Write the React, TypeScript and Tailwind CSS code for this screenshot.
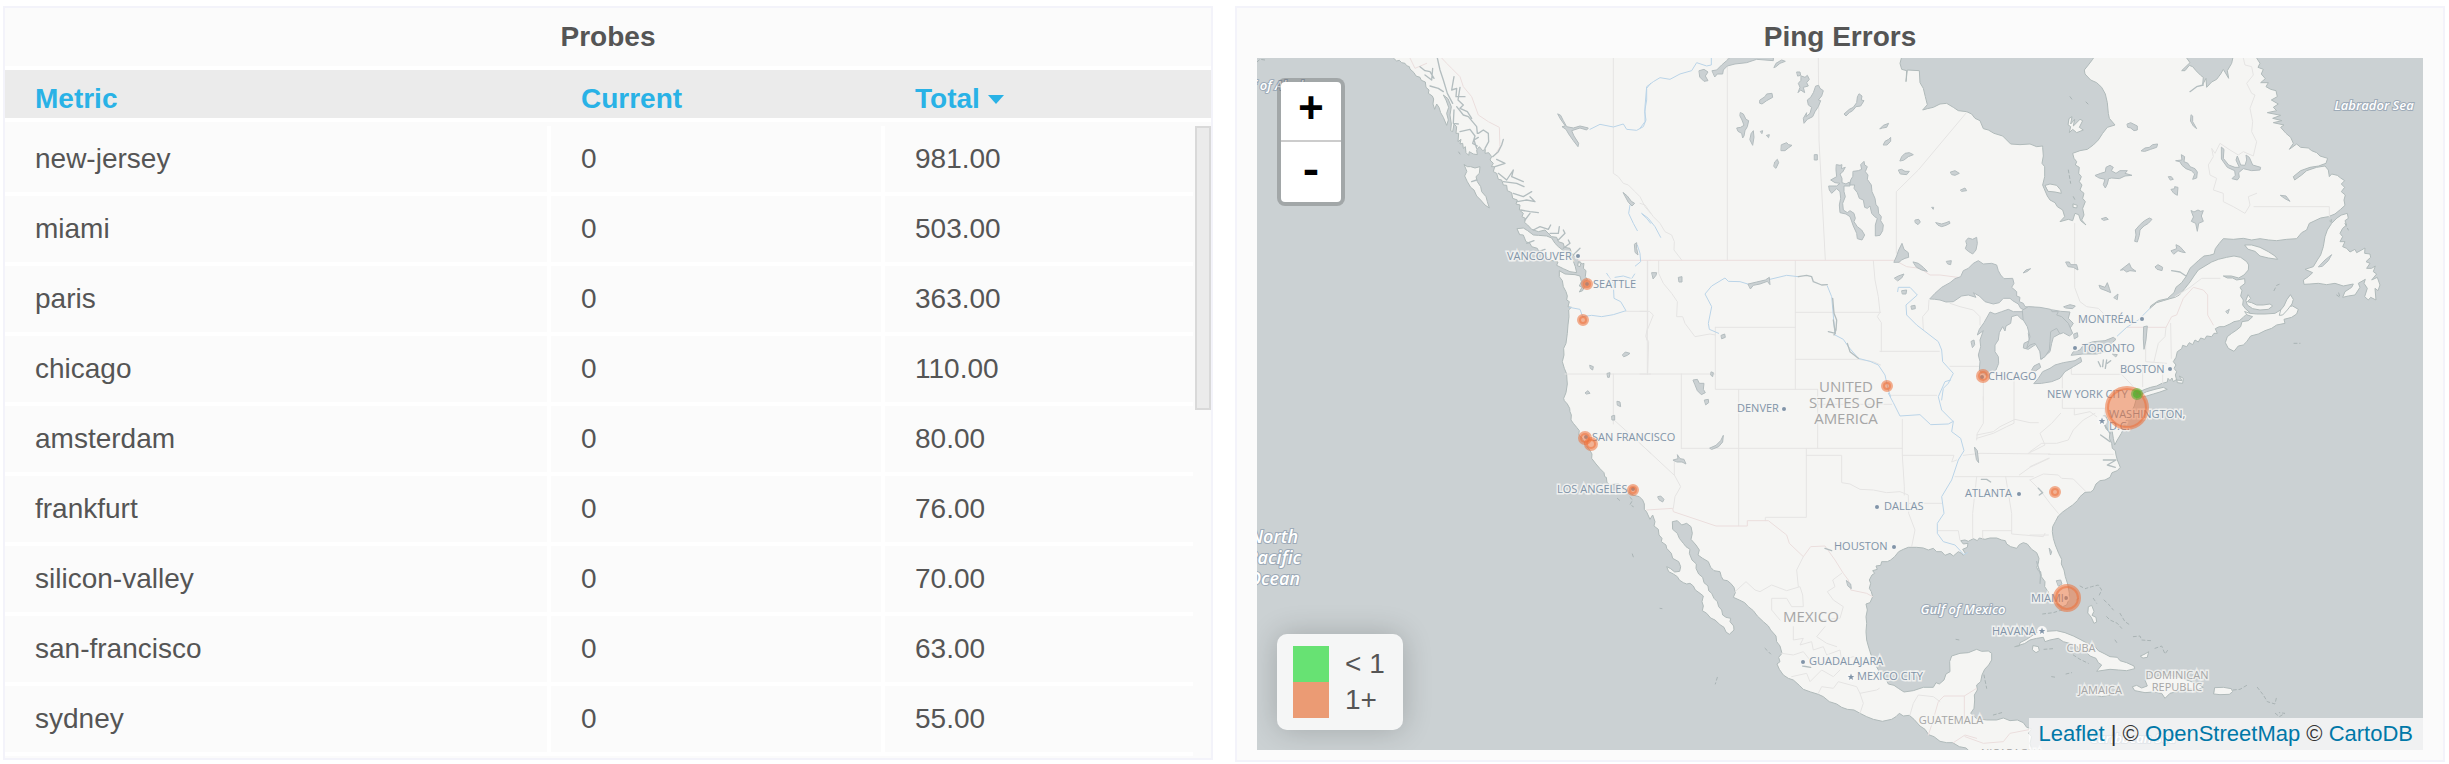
type Sheet = [number, number];
type Leg = [Sheet, string];

// The base map is digitised on six overlapping sheets; each has its own origin.
const NW: Sheet = [-81, -174];
const N: Sheet = [1149, -24];
const NE: Sheet = [2319, -24];
const SW: Sheet = [-81, 966];
const S: Sheet = [1149, 966];
const SE: Sheet = [2319, 966];

function line(...legs: Leg[]): string {
  const pts = legs.flatMap(([[ox, oy], text]) =>
    text
      .trim()
      .split(/\s+/)
      .map((pair) => {
        const [x, y] = pair.split(",").map(Number);
        return `${x + ox} ${y + oy}`;
      })
  );
  return "M" + pts.join("L");
}

const area = (...legs: Leg[]) => line(...legs) + "Z";

const mainland = area(
  [NW, "485,160 490,174 500,183 508,181 515,188 525,190 530,197 538,200 540,207 552,218 558,228 570,232 574,241 586,246 588,262 597,270 595,280 607,288 611,297 609,312 614,328 620,312 627,322 632,338 640,352 650,376 655,360 650,340 656,322 648,300 640,285 654,296 664,320 660,345 664,372 662,392 668,395 672,372 680,380 678,400 686,400 684,425 693,418 690,432 698,430 700,445 706,440 708,458 716,466 718,455 730,462 742,464 740,450 748,440 758,452 766,448 765,460 776,458 785,470 780,480 790,490 784,500 794,500 790,515 800,520 805,538 815,540 820,555 830,556 832,572 845,578 848,595 862,600 858,612 870,615 868,630 880,640 876,650 886,655 884,668 893,675 905,688 925,695 945,690 965,710 980,712 985,725 1000,730 1003,742 1020,745 1025,760 1040,775 1050,785 1056,792 1062,790 1060,805 1068,812 1066,830 1072,838 1066,850 1072,858 1062,862 1058,872 1048,876 1056,862 1048,858 1054,845 1050,828 1035,824 1005,822 988,812 988,830 997,842 1000,860 1008,875 1012,888 1010,900 1018,905 1014,920 1024,922 1016,930 1017,950 1014,975 1012,1000 1008,1030 1001,1045 1002,1065 997,1085 1003,1105 1010,1122 1011,1140"],
  [SW, "1012,12 1008,38 1001,55 1003,62 1012,72 1019,85 1020,95 1024,105 1023,120 1030,130 1040,142 1048,152 1046,165 1060,178 1066,195 1078,208 1086,222 1085,235 1098,252 1110,266 1122,278 1124,290 1129,292 1131,308 1140,314 1165,312 1178,320 1190,325 1200,340 1212,346 1228,350 1238,360 1243,372 1243,388 1250,396 1260,418"],
  [S, "38,405 45,425 42,438 55,448 57,465 66,475 64,485 78,495 80,505 94,520 98,535 116,545 122,560 119,574 104,576 92,566 80,560 86,575 100,582 112,590 118,600 130,608 140,612 150,610 160,618 166,630 180,640 190,648 186,665 190,678 187,692 200,700 212,714 225,720 240,734 252,742 258,756 268,763 282,750 281,738 270,725 272,715 258,712 248,705 245,690 236,680 232,665 222,655 215,640 206,632 204,618 192,608 188,592 176,582 168,565 169,552 156,540 148,520 150,508 138,500 130,490 118,475 112,460 98,448 97,425 112,422 125,435 140,430 153,440 157,460 153,478 168,495 178,510 174,525 188,535 205,545 212,562 222,572 240,575 244,590 250,600 262,602 272,610 282,622 286,638 280,652 298,660 314,668 325,680 340,692 352,708 370,725 385,738 392,750 408,768 410,785 420,798 426,820 416,832 420,845 411,852 418,868 430,885 445,895 460,900 478,916 490,928 512,936 535,943 550,950 568,965 590,972 605,982 622,988 642,990 660,1000 680,1010 700,1018 727,1024 755,1018 768,1010 778,1000 790,1008 808,1006 822,1018 840,1038 855,1048 866,1064 882,1070 900,1084 920,1088 938,1088 958,1100 978,1104 995,1120 1000,1160 1200,1160 1176,1110 1170,1090 1175,1070 1166,1060 1174,1046 1160,1042 1150,1028 1132,1020 1110,1022 1090,1014 1070,1020 1040,1020 1010,1016 992,1000 1002,985 1004,960 1003,945 1012,930 1010,915 1022,905 1026,885 1034,868 1046,855 1055,840 1055,820 1045,813 1025,814 1010,808 985,818 960,820 935,828 929,845 930,875 918,882 912,900 898,912 888,908 880,922 850,922 820,932 792,936 775,925 762,916 745,912 735,890 722,885 714,868 704,850 695,830 690,815 684,795 680,780 678,755 680,730 678,710 682,690 678,672 690,668 698,650 694,635 688,625 692,610 688,600 696,585 704,580 698,572 712,568 708,558 722,556 725,545 742,545 752,540 764,530 776,515 790,508 805,502 830,502 850,504 865,510 880,505 890,515 905,515 915,526 930,520 940,528 955,515 965,520 970,526 976,520 968,508 982,502 984,490 970,492 962,482 975,480 985,484 1000,476 1012,482 1018,474 1035,478 1050,474 1070,474 1085,480 1096,482 1100,492 1112,500 1130,505 1138,494 1150,488 1162,492 1175,508 1190,518 1197,535 1195,550 1190,562 1195,572 1202,575 1204,590 1215,605 1214,620 1225,636"],
  [SE, "58,650 70,668 85,672 98,680 110,675 116,660 118,640 113,612 106,590 102,570 94,552 95,538 86,520 76,495 70,475 67,455 68,440 76,425 85,408 98,396 112,386 128,375 142,362 150,350 165,337 182,336 190,330 198,312 210,302 225,300 240,292 246,278 262,272 271,262 262,240 258,225 256,212 247,205 245,190 238,175 240,158 228,146 222,130 216,110 226,106 234,122 240,135 246,150 250,175 254,195 262,180 274,160 280,148 275,138 286,125 296,112 305,95 313,78 318,60 322,45 326,36 345,28 362,22 380,18 396,10"],
  [NE, "405,998 412,996 414,985 420,992 426,984 430,995 440,988 442,998 458,1000 460,985 448,978 456,992 440,990 436,975 440,965 432,955 438,945 430,935 438,922 442,905 455,896 458,886 470,890 478,878 488,884 495,870 505,876 512,864 524,868 530,858 545,860 552,850 562,850 556,836 568,830 582,830 600,822 612,815 628,812 640,802 648,794 660,788 646,776 638,765 640,750 632,738 636,722 630,712 645,700 644,686 620,690 608,684 592,684 580,678 604,678 626,684 642,675 655,660 656,645 650,635 632,622 612,618 590,622 565,628 545,636 525,648 505,660 492,678 480,696 465,715 448,735 435,742 420,746 400,752 380,758 360,775 362,768 385,752 412,746 432,728 438,712 455,698 468,680 480,655 492,644 505,632 522,618 538,616 552,612 556,596 568,580 580,566 610,568 640,565 665,570 690,566 716,570 740,572 770,568 800,566 815,548 830,540 838,520 855,512 872,504 895,500 915,492 932,478 945,466 942,450 946,435 934,425 944,412 934,402 944,392 932,384 922,376 905,372 898,380 895,360 885,348 860,352 830,362 815,375 794,390 790,380 812,362 840,352 866,348 888,340 893,325 870,318 860,308 845,302 835,294 812,292 800,282 778,298 790,280 782,262 768,250 752,232 762,225 730,218 756,212 728,205 752,196 712,188 740,182 730,172 745,162 724,150 742,140 738,122 722,118 708,110 715,98 692,98 706,86 694,72 700,58 684,52 690,40 680,24 680,8 612,8 605,40 592,62 596,85 580,58 572,72 560,88 545,96 530,112 528,85 518,104 520,82 512,76 498,62 488,50 478,46 465,62 455,62 480,38 470,24 470,8 200,8 188,28 175,45 163,60 165,72 182,90 200,98 215,112 226,132 232,158 235,190 238,205 255,225 232,232 218,250 205,270 190,285 172,298 150,302 128,310 132,325 140,335 136,345 148,352 146,370 154,380 148,395 156,405 150,420 162,430 158,445 166,455 158,475 162,495 155,510 168,525 152,512 146,494 135,490 128,512 115,508 90,515 104,500 98,480 82,470 75,458 60,450 52,438 42,415 38,405 44,380 44,350 36,340 40,318 38,292"],
  [N, "1208,288 1190,290 1170,282 1140,284 1112,282 1100,270 1088,258 1062,250 1045,240 1030,236 1020,212 1005,205 995,192 980,185 955,182 940,172 920,160 900,162 880,172 862,176 848,180 862,164 856,140 850,115 840,98 838,62 802,60 798,95 800,62 785,58 780,40 788,10"]
);

const islands = [
  area([NW, "703,494 712,500 722,500 735,504 750,500 748,520 738,530 742,545 752,560 755,575 768,590 772,605 778,624 765,615 752,600 740,588 732,570 722,562 712,545 704,528 710,515"]),
  area([NW, "862,686 880,684 893,692 910,705 925,706 950,708 965,714 975,730 985,740 1000,752 1015,765 1028,778 1036,800 1040,818 1020,815 1000,806 980,796 984,786 960,780 940,760 930,762 922,745 905,740 900,730 888,725 880,705 870,704"]),
  area([NW, "1046,786 1052,792 1050,800 1044,798"]),
  area([NE, "645,585 665,585 690,592 715,605 735,618 743,628 715,624 690,618 675,604 655,598"]),
  area([NE, "935,495 952,490 955,505 945,512 950,525 938,535 930,550 938,560 930,575 945,575 938,590 950,595 960,606 975,598 980,608 995,600 1005,594 1004,610 1020,612 1022,622 1008,635 1020,640 1010,655 1025,655 1036,648 1030,665 1040,672 1025,690 1042,682 1050,705 1044,722 1035,715 1038,750 1022,742 1015,750 1004,740 1012,715 1002,700 1006,688 985,700 990,712 975,735 955,738 938,742 945,725 965,712 970,702 940,708 915,700 890,704 865,700 840,702 822,703 820,690 835,680 848,668 825,658 850,650 862,630 872,615 880,590 885,560 892,540 905,520 920,505"]),
  area([NE, "645,785 660,790 680,792 705,792 735,790 755,778 770,770 788,768 805,778 800,792 785,802 762,808 765,820 740,825 725,835 705,842 685,852 662,858 650,875 640,885 625,888 612,904 595,895 586,878 592,860 605,850 620,840 632,830 636,815 655,812 668,800 652,795"]),
  area([NE, "782,735 790,748 786,762 772,780 758,795 748,796 752,780 762,768 770,750"]),
  area([NE, "655,735 662,745 652,755 665,758 680,765 700,765 720,762 728,768 715,778 690,780 668,776 652,765 648,752"]),
  area([NE, "46,406 60,402 80,406 92,420 94,430 75,426 55,424"]),
  area([SE, "330,45 350,35 375,28 400,22 412,28 390,36 370,42 350,48 332,52"]),
  area([SE, "-45,800 -32,798 -30,788 -10,778 5,768 20,758 50,754 80,752 105,758 130,768 150,778 172,790 195,800 205,812 225,822 240,830 262,832 270,842 290,848 312,858 314,866 290,872 265,870 240,868 200,874 215,855 205,848 198,835 180,828 165,812 148,808 140,798 118,790 100,785 85,775 60,780 45,785 40,772 20,775 0,780 -15,790"]),
  area([SE, "10,797 25,800 28,812 18,818 8,810"]),
  area([SE, "308,920 320,916 335,924 352,918 345,900 365,895 385,888 410,884 440,890 470,900 505,912 520,922 500,930 470,926 440,935 420,940 405,955 395,940 370,936 345,938 315,932"]),
  area([SE, "188,935 205,930 235,934 240,945 215,950 195,945"]),
  area([SE, "555,923 580,922 604,926 608,935 598,943 570,944 552,942"]),
  area([SE, "176,680 185,676 192,694 186,706 198,712 200,726 192,730 184,712 174,700"]),
  area([SE, "332,828 345,822 356,815 352,832 340,834"]),
  area([NE, "118,205 126,200 122,222 134,208 130,228 150,208 158,212 148,232 160,240 140,248 128,238 118,248 122,230 115,225"]),
  area([NE, "130,462 142,466 140,474 130,472"]),
  area([NE, "900,512 905,508 904,516"]),
];

const waters = [
  area([N, "870,746 885,730 905,712 930,698 945,686 962,680 970,662 985,655 1000,640 1015,632 1030,642 1055,640 1070,645 1075,662 1082,675 1092,686 1118,685 1122,700 1115,712 1130,725 1130,738 1140,742 1138,755 1150,760 1155,770 1180,772 1210,778 1240,780 1262,784 1290,786 1285,805 1300,820 1290,835 1270,830 1262,815 1240,800 1262,850 1240,862 1235,880 1230,905 1215,918 1205,928 1200,905 1200,885 1192,880 1180,888 1165,898 1150,894 1152,880 1168,872 1165,850 1172,838 1166,815 1145,808 1132,795 1115,800 1112,820 1098,828 1095,843 1088,830 1078,848 1075,870 1065,885 1065,905 1075,920 1076,940 1068,960 1050,975 1028,975 1018,960 1020,935 1015,915 1022,890 1020,870 1030,842 1012,855 1018,838 1032,818 1045,795 1050,786 1065,792 1085,785 1105,778 1120,785 1150,785 1165,785 1142,775 1135,762 1118,752 1110,745 1090,745 1078,758 1060,762 1035,755 1018,738 1000,728 1008,742 985,735 965,738 940,755 918,756 900,750 885,748"]),
  area([NE, "-22,780 -5,770 30,772 62,778 66,785 85,785 80,795 95,800 115,820 128,850 118,858 100,848 90,852 80,835 62,845 60,875 58,900 45,920 32,928 30,905 15,880 0,885 -10,895 0,860 -8,830 -20,810"]),
  area([NE, "12,1000 25,985 38,965 60,955 75,945 100,938 135,932 152,922 155,935 130,950 105,965 90,985 65,995 35,1000"]),
  area([NE, "124,915 130,905 150,900 160,885 190,875 225,872 250,862 258,868 245,880 222,885 228,905 200,912 160,912"]),
  area([NE, "5,960 12,948 28,940 32,952 18,962"]),
  area([N, "217,62 230,60 245,45 260,32 272,20 400,20 400,32 350,28 320,38 285,42 262,48 250,60 248,72 232,72 225,80"]),
  area([N, "402,52 408,40 425,30 436,34 420,40 408,50"]),
  area([N, "178,62 192,58 204,66 196,78 204,92 192,94 180,82"]),
  area([N, "360,150 375,140 380,132 396,130 398,142 380,152 366,162 360,160"]),
  area([N, "471,66 480,66 482,76 474,78"]),
  area([N, "484,78 495,82 502,76 508,88 500,98 505,108 490,112 494,128 482,120 474,128 480,112 475,100 482,92"]),
  area([N, "528,108 536,106 540,115 550,122 545,138 535,150 542,152 535,170 525,185 518,200 502,208 492,220 490,205 500,188 498,200 510,190 515,172 505,165 502,150 512,142 520,128"]),
  area([N, "302,188 310,192 318,208 326,212 322,230 315,242 312,258 308,264 305,250 294,244 290,234 302,232 312,226 306,210 300,198"]),
  area([N, "334,250 340,242 342,262 338,286 330,270"]),
  area([N, "362,244 368,242 366,250"]),
  area([N, "380,256 388,254 386,262"]),
  area([N, "425,284 440,278 446,284 456,286 445,294 435,302 424,302"]),
  area([N, "405,335 412,328 416,338 408,355 402,350"]),
  area([N, "524,314 532,314 532,330 524,330"]),
  area([N, "658,132 666,138 664,150 672,152 662,168 648,170 638,182 628,188 618,198 612,192 628,178 640,172 650,158 652,142"]),
  area([N, "720,236 730,226 746,220 740,232 728,234"]),
  area([N, "730,284 735,274 746,268 752,262 752,274 742,284"]),
  area([N, "780,332 785,320 795,310 808,308 820,314 805,320 792,330"]),
  area([N, "776,360 785,358 795,364 808,364 800,374 782,372"]),
  area([N, "932,366 945,362 958,370 945,376 936,374"]),
  area([N, "962,420 975,414 980,422 966,424"]),
  area([N, "826,510 836,508 841,516 834,524 826,518"]),
  area([N, "888,518 905,522 918,518 928,514 930,520 918,526 905,530 895,526"]),
  area([N, "876,472 881,472 880,477"]),
  area([N, "590,344 600,346 606,344 604,356 616,352 608,366 600,372 606,385 606,398 618,402 628,396 630,408 612,408 612,425 616,440 608,460 610,480 622,488 630,482 642,490 646,505 642,515 652,530 665,540 674,555 666,570 652,566 650,550 640,528 630,500 618,492 600,488 598,465 602,445 600,425 590,416 575,430 568,420 566,408 590,408 600,400 585,398 572,390 590,380 588,360"]),
  area([N, "640,364 655,362 665,358 662,344 672,334 674,345 682,350 676,365 684,375 682,388 694,405 696,425 705,445 708,465 714,470 716,490 724,500 722,512 730,525 728,542 720,556 706,558 706,525 712,505 704,500 695,490 690,468 682,475 674,472 670,450 658,445 652,428 642,415 644,405 630,405 632,390 638,380"]),
  area([N, "978,572 985,564 998,568 1010,562 1012,580 1008,600 998,612 985,604 976,596 980,585"]),
  area([N, "762,636 770,618 776,600 786,580 792,598 805,608 806,622 795,625 785,630 778,636"]),
  area([N, "820,636 835,640 850,652 862,664 845,660 830,652"]),
  area([N, "764,684 775,678 792,672 785,684 774,692"]),
  area([N, "786,722 800,720 798,732 788,732"]),
  area([N, "814,768 825,766 826,776 816,778"]),
  area([N, "920,634 934,632 932,644 924,642"]),
  area([N, "1150,668 1158,660 1172,656 1162,664"]),
  area([N, "36,668 50,668 48,676 40,686"]),
  area([N, "116,682 126,680 126,696 118,696"]),
  area([N, "244,856 254,852 256,862 246,866"]),
  area([N, "214,966 220,968 218,980 213,976"]),
  area([N, "160,990 172,988 178,1000 192,1000 190,1018 196,1028 184,1034 172,1022 165,1005"]),
  area([N, "994,874 1002,870 1004,884 998,892"]),
  area([N, "325,702 350,696 376,690 388,682 390,704 382,694 360,702 340,706 332,716"]),
  area([S, "194,60 205,58 206,68 198,74"]),
  area([NW, "984,342 992,346 1000,362 1010,380 1030,384 1050,378 1075,384 1070,390 1050,384 1025,392 1032,408 1046,430 1044,440 1030,422 1016,402 1008,388 996,380 1006,378 992,358"]),
  area([NW, "1180,578 1192,588 1204,604 1214,610 1206,618 1196,608"]),
  area([NW, "1178,1064 1186,1056 1200,1060 1192,1066 1182,1070"]),
  area([NW, "1080,1096 1090,1100 1088,1110 1082,1106"]),
  area([NW, "1132,1120 1140,1118 1138,1132 1134,1132"]),
  area([NW, "1214,732 1220,728 1220,745 1224,765 1216,758"]),
  area([SW, "1066,38 1074,32 1080,40 1070,42"]),
  area([SW, "1162,64 1170,66 1172,80 1163,76"]),
  area([SW, "1146,108 1154,106 1154,120 1147,120"]),
  area([S, "54,350 62,348 72,358 68,366 58,360"]),
  area([S, "100,240 114,236 112,224 120,236 132,238 138,252 126,246 112,246"]),
  area([S, "210,204 228,196 242,182 250,166 248,186 236,200 216,208"]),
  area([S, "1004,202 1012,212 1016,248 1010,240"]),
  area([S, "620,602 632,612 634,626 624,618"]),
  area([NE, "292,222 302,218 322,228 322,240 312,242 302,234 294,232"]),
  area([NE, "484,195 488,198 488,215 500,236 490,228 482,214"]),
  area([NE, "334,302 345,294 358,292 368,284 383,282 380,292 362,298 345,304"]),
  area([NE, "196,376 212,370 226,366 228,352 240,346 250,352 244,362 258,370 270,362 292,362 285,370 306,376 285,378 268,386 245,384 236,386 232,402 226,414 220,404 225,388 208,384"]),
  area([NE, "438,332 456,330 454,314 464,320 462,335 474,340 480,350 495,356 502,366 500,384 488,388 494,372 484,362 468,356 456,346 450,336"]),
  area([NE, "416,380 424,380 430,388 422,390"]),
  area([NE, "424,418 434,416 434,410 444,412 442,436 432,430"]),
  area([NE, "344,512 358,504 366,508 355,520 342,528 330,540 328,556 322,576 314,574 318,555 316,540 330,524"]),
  area([NE, "215,506 228,502 235,508 222,511"]),
  area([NE, "575,292 582,298 580,325 596,345 615,352 628,352 618,330 622,318 632,345 645,346 650,330 648,315 658,322 668,345 692,352 690,360 665,362 640,356 626,368 628,382 622,390 606,386 616,376 614,362 592,352 575,328"]),
  area([NE, "752,436 768,438 780,454 765,446"]),
  area([NE, "484,482 492,486 504,480 512,484 520,482 514,498 520,514 506,520 502,544 497,520 484,514 490,502"]),
  area([NE, "424,602 440,596 438,584 450,590 466,608 455,606 444,602 432,612"]),
  area([NE, "272,660 285,650 298,640 304,654 318,664 300,662 290,666 282,660"]),
  area([NE, "376,650 384,644 398,652 396,662 382,658"]),
  area([NE, "108,636 118,636 122,644 140,644 144,660 130,652 115,650"]),
  area([NE, "208,706 225,712 232,698 238,715 242,728 228,722 212,716"]),
  area([NE, "252,742 264,732 262,748"]),
  area([NE, "102,770 120,764 136,768 128,776 108,774"]),
  area([NE, "342,830 352,828 348,870 342,898 340,868"]),
  area([NE, "132,852 142,848 144,860 134,866"]),
  area([NE, "588,784 598,778 594,790"]),
  area([NE, "866,650 885,630 905,614 895,632 878,648"]),
  area([NE, "248,912 262,914 258,920"]),
  area([SE, "80,602 92,600 96,612 86,618"]),
  area([SE, "58,505 65,515 62,524"]),
];

const inlets = [
  line([NW, "570,200 585,212 600,215 612,235"]),
  line([NW, "585,225 605,240 608,205"]),
  line([NW, "622,174 630,210 640,240 652,280 668,310"]),
  line([NW, "600,258 625,265 640,275"]),
  line([NW, "672,230 665,270 680,265 678,290 705,290"]),
  line([NW, "690,262 684,300 700,315 690,325 712,335 725,355"]),
  line([NW, "680,320 700,345 715,350 740,380 742,400"]),
  line([NW, "672,330 670,370 685,372"]),
  line([NW, "690,395 720,388 735,408 728,430 742,438"]),
  line([NW, "745,400 760,390 775,400 776,425 765,445"]),
  line([NW, "740,445 732,420 745,412"]),
  line([NW, "788,470 805,455 815,435 820,418"]),
  line([NW, "795,500 825,490 800,478"]),
  line([NW, "805,520 830,540 850,510 845,530 880,545"]),
  line([NW, "820,545 860,550 882,560"]),
  line([NW, "850,580 880,590 905,575"]),
  line([NW, "862,605 890,600 915,605 900,590"]),
  line([NW, "872,630 900,635 925,638"]),
  line([NW, "885,660 900,640"]),
  line([NW, "910,690 930,680 955,688 962,675"]),
  line([NW, "960,700 985,700 988,680"]),
  line([NW, "985,720 1005,700 1000,690"]),
  line([NW, "1000,745 1020,730 1015,720"]),
  line([NW, "1030,765 1050,745"]),
  line([NW, "890,730 912,722"]),
  line([NW, "925,755 945,748"]),
  line([NW, "725,545 740,540"]),
  line([N, "475,680 500,676 515,680 520,695 545,705 562,704"]),
  line([N, "578,745 582,790 590,810 588,840 582,855"]),
  line([N, "565,845 586,850 580,810"]),
  line([N, "622,880 630,905 655,925"]),
  line([NE, "480,125 500,110 520,105"]),
  line([NE, "425,662 450,666 468,678"]),
  line([NE, "205,935 212,950"]),
  line([NE, "220,930 218,950"]),
  line([NE, "230,930 226,955"]),
  line([NE, "242,932 232,940"]),
  line([SE, "215,120 240,160"]),
  line([SE, "212,165 240,185"]),
  line([SE, "220,240 258,240 232,255 256,262"]),
  line([SE, "25,325 38,338 28,345"]),
  line([SE, "20,545 32,585 30,610"]),
  line([S, "488,858 512,862"]),
  line([S, "555,505 575,512"]),
  line([S, "1024,298 1040,298 1052,306"]),
];

const reefs = [
  line([SE, "150,618 165,626 185,620 205,615 215,630 208,645"]),
  line([SE, "140,660 145,655"]),
  line([SE, "222,660 235,672 250,690"]),
  line([SE, "190,655 200,670"]),
  line([SE, "230,710 240,720 262,730 275,745"]),
  line([SE, "270,700 285,725 300,735"]),
  line([SE, "310,770 330,768 335,780 362,782"]),
  line([SE, "375,805 395,798 405,822 415,808"]),
  line([SE, "38,702 70,698 95,690"]),
  line([SE, "130,825 150,838 175,850"]),
  line([SE, "610,930 630,928 652,915"]),
  line([SE, "682,922 700,945 712,965 735,972 740,950"]),
  line([SE, "736,1000 748,1010 765,1000 748,998"]),
  line([SE, "65,890 78,892"]),
  line([SE, "108,882 125,878"]),
  line([SE, "42,808 70,806"]),
  line([SE, "255,780 262,790"]),
  line([NE, "120,140 126,148"]),
  line([NE, "115,360 122,400"]),
  line([NE, "130,440 138,455"]),
  line([NE, "168,156 174,162"]),
  line([NE, "792,880 810,880"]),
  line([NE, "732,722 740,706 750,702"]),
  line([NE, "945,520 955,540"]),
  line([NE, "920,735 930,742 925,725"]),
  line([S, "375,805 392,822"]),
  line([S, "948,778 958,780"]),
  line([S, "1060,1005 1085,998"]),
  line([S, "60,685 66,686"]),
  line([S, "232,892 226,912"]),
  line([S, "1032,885 1040,925"]),
  line([SW, "1162,355 1170,362"]),
  line([SW, "1200,352 1208,360 1200,374 1210,380"]),
  line([SW, "1207,522 1211,534"]),
  line([NW, "686,456 690,462"]),
  line([NW, "81,186 90,178 105,180"]),
];

const borders = [
  line([NW, "1150,174 1150,520 1165,530 1180,550 1195,555 1215,575 1230,590 1245,620 1262,640"]),
  line([N, "0,460 15,465 40,500 60,520 75,545 95,555 103,575 102,600 125,630"]),
  line([N, "262,24 262,630"]),
  line([N, "535,24 537,270 545,420 556,630"]),
  line([N, "980,187 835,360 769,425 769,610"]),
  line([NE, "134,520 134,712 150,755 170,770 205,775 220,790"]),
  line([N, "22,632 22,972"]),
  line([N, "56,632 56,670 70,700 95,730 112,755 110,800 128,800 135,820 165,860 210,852 226,855"]),
  line([N, "466,632 466,1018"]),
  line([N, "226,832 466,832"]),
  line([N, "226,832 226,1018 532,1018"]),
  line([N, "466,787 722,787"]),
  line([N, "466,928 655,928 700,935 722,945"]),
  line([N, "700,632 705,690 715,740 720,787 712,800 724,818 724,905"]),
  line([N, "720,904 898,904"]),
  line([N, "867,750 865,780 848,800 850,840"]),
  line([N, "930,760 960,770 1000,780 1020,800 1020,825"]),
  line([N, "930,949 1018,949"]),
  line([N, "1030,975 1030,1050"]),
  line([N, "1122,975 1122,1120 1100,1130 1060,1150 1010,1165"]),
  line([N, "0,784 28,784 40,795 22,840 20,870"]),
  line([N, "0,972 226,972"]),
  line([N, "124,972 124,1195"]),
  line([N, "296,1018 296,1427"]),
  line([NW, "1253,782 1253,930"]),
  line([NW, "1187,934 1253,934"]),
  line([NW, "1253,934 1253,980 1247,1010 1256,1025 1253,1122"]),
  line([NW, "1005,1122 1262,1122"]),
  line([SW, "1150,132 1150,118 1230,190 1262,220"]),
  line([NW, "1150,1122 1150,1260"]),
  line([S, "0,190 102,285"]),
  line([S, "124,205 787,205"]),
  line([S, "103,240 103,285 122,320 105,350 100,385"]),
  line([S, "533,28 533,205"]),
  line([S, "533,73 755,73"]),
  line([S, "787,118 787,226 942,226 935,246 950,240"]),
  line([S, "499,205 499,412 376,412 376,422"]),
  line([S, "499,226 605,226 605,308 630,312 660,328 700,330 740,338 780,335 805,345 806,400 825,450 815,500"]),
  line([S, "787,226 793,320 793,345"]),
  line([S, "806,370 905,370"]),
  line([S, "752,46 890,46"]),
  line([S, "945,290 1180,290"]),
  line([S, "970,226 1020,220 1230,222"]),
  line([S, "1010,290 998,400 998,475"]),
  line([S, "1097,290 1115,400 1115,462 1210,470 1215,460"]),
  line([S, "1028,452 1115,452"]),
  line([S, "1028,452 1028,475"]),
  line([S, "895,452 955,452 960,480"]),
  line([S, "1030,50 1030,130 1012,160 1010,180"]),
  line([S, "1010,165 1060,155 1080,140 1125,118 1170,128 1195,128"]),
  line([S, "1165,220 1215,195 1200,160 1235,130 1262,100"]),
  line([S, "1138,285 1170,262 1228,235"]),
  line([SE, "0,215 35,190 80,190 115,180 130,150 160,120 195,100"]),
  line([SE, "55,223 250,223"]),
  line([SE, "0,260 55,235"]),
  line([SE, "0,300 40,282 85,285 95,295 130,297 168,335"]),
  line([SE, "0,300 30,330 60,370 85,400"]),
  line([SE, "0,465 55,465"]),
  line([SE, "97,-15 97,85 225,85 225,110"]),
  line([SE, "133,85 133,105 180,95 200,110"]),
  line([NE, "124,935 124,973 275,973 310,1010"]),
  line([NE, "347,870 347,935 410,940"]),
  line([NE, "408,832 405,860 385,880 372,935"]),
  line([NE, "422,820 424,925"]),
  line([NE, "398,940 398,1000"]),
  line([NE, "338,945 338,1010"]),
  line([NE, "640,24 645,45 665,50 670,75 650,100 665,130 675,135 660,175 668,215 665,245 680,275 670,318 640,305 625,315 600,300 570,280 555,310 545,295 550,320 535,345 540,375 560,385 550,420 580,430 580,455 610,470 645,490 660,465 655,440 680,430"]),
  line([NE, "672,470 898,470 898,500"]),
  line([NE, "435,740 480,712 515,685 570,685"]),
  line([S, "285,635 318,605 345,630 360,635 395,615 440,632 480,620 488,645 490,680 455,680 440,655 395,655 395,690 420,720"]),
  line([S, "490,530 470,570 475,620"]),
  line([S, "605,580 578,600 585,620 562,635 580,660 610,680 600,715 540,720"]),
  line([S, "460,740 460,780 490,775 480,795 515,785 520,810 550,800 560,825 600,810 605,840 640,830 680,850"]),
  line([S, "555,740 530,770 560,790 590,800"]),
  line([S, "425,820 460,825 490,815 510,840 550,850"]),
  line([S, "455,890 500,880 510,905 545,870 580,890 600,870"]),
  line([S, "535,940 545,920 580,925 595,905 650,920 660,940 710,930 718,925"]),
  line([S, "660,940 670,970 660,1000"]),
  line([S, "810,1005 820,970 835,945 880,950 900,965"]),
];

const frontiers = [
  line([NW, "540,174 555,205 590,190"]),
  line([NW, "635,174 650,190 665,205 690,230 700,260 725,290 745,345 775,365 808,382 810,440 795,465"]),
  line([NW, "1045,781 1260,781"]),
  line([N, "30,631 765,631"]),
  line([N, "765,631 800,650 840,655 870,675 900,675 960,683"]),
  line([NE, "290,832 408,832 425,800 440,795 460,745 490,712 520,720 533,735 533,795 550,825"]),
  line([S, "20,390 98,385 100,395 228,438 322,438 322,422 385,422 440,465 448,490 490,530 512,500 555,498 585,540 610,580 625,600 632,630 680,640 698,650"]),
  line([S, "865,1065 875,1035 895,965 912,948 973,948 973,1015"]),
  line([S, "973,948 1010,925"]),
  line([S, "940,1088 975,1065 1010,1075"]),
  line([S, "975,1070 1030,1090 1090,1085 1110,1060 1172,1048"]),
];

const rivers = [
  line([NW, "1080,388 1110,373 1150,381 1180,372 1190,388 1220,391 1240,380 1248,360 1244,335 1250,300 1250,265 1262,250"]),
  line([N, "0,235 15,215 15,170 20,110 40,95 60,83 90,88 120,72 155,62 170,38 200,48 214,45 214,24"]),
  line([N, "5,490 25,505 45,530 62,562"]),
  line([NW, "1200,615 1196,640 1210,670 1222,692"]),
  line([NW, "1236,642 1250,655 1262,670"]),
  line([NW, "1222,735 1230,760 1232,785 1216,798"]),
  line([NW, "1155,832 1180,828 1205,836 1214,822"]),
  line([NW, "1130,820 1150,850 1152,895 1172,905 1188,932 1150,944 1115,950 1085,946 1058,950 1050,928 1018,922"]),
  line([N, "236,850 208,838 205,820 215,770 195,732 215,708 255,684 265,694 300,695 330,704 390,688 440,676 475,680"]),
  line([N, "562,708 575,740 585,855 610,868 625,890 655,925 690,934 715,945 735,975 745,1020 752,1040"]),
  line([S, "745,40 760,68 780,108 840,104 872,134 925,132 940,124"]),
  line([N, "773,725 775,712 810,712 832,735 798,765 800,795 830,825 895,875 905,900 908,935 940,970 925,1000 910,1015 905,1050"]),
  line([S, "932,0 915,5 895,50 905,90 940,125 935,155 962,175 972,212 955,240 935,300 905,350 912,400 892,430 892,460 910,485 945,495 972,524 982,518"]),
  line([NE, "360,775 325,810 290,832 262,858"]),
];

type Marker = { name: string; x: number; y: number; r: number; ok?: boolean };

const markers: Marker[] = [
  { name: "seattle", x: 330, y: 226, r: 4 },
  { name: "portland", x: 326, y: 262, r: 4 },
  { name: "san-francisco", x: 328, y: 380, r: 5 },
  { name: "silicon-valley", x: 334, y: 386, r: 5 },
  { name: "los-angeles", x: 376, y: 432, r: 4 },
  { name: "omaha", x: 630, y: 328, r: 4 },
  { name: "chicago", x: 726, y: 318, r: 5 },
  { name: "atlanta", x: 798, y: 434, r: 4 },
  { name: "miami", x: 810, y: 540, r: 12 },
  { name: "new-jersey", x: 870, y: 350, r: 20 },
  { name: "new-york", x: 880, y: 336, r: 4, ok: true },
];

type City = [name: string, x: number, y: number, pinX: number, pinY: number, capital?: boolean];

const cities: City[] = [
  ["VANCOUVER", 250, 202, 321, 198],
  ["SEATTLE", 336, 230, 330, 226],
  ["SAN FRANCISCO", 335, 383, 329, 379],
  ["LOS ANGELES", 300, 435, 376, 431],
  ["DENVER", 480, 354, 527, 351],
  ["DALLAS", 627, 452, 620, 449],
  ["HOUSTON", 577, 492, 637, 489],
  ["ATLANTA", 708, 439, 762, 436],
  ["MIAMI", 774, 544, 809, 540],
  ["CHICAGO", 731, 322, 725, 319],
  ["MONTRÉAL", 821, 265, 885, 261],
  ["TORONTO", 825, 294, 818, 290],
  ["BOSTON", 863, 315, 913, 311],
  ["NEW YORK CITY", 790, 340, 880, 336],
  ["WASHINGTON,", 852, 360, 845, 363, true],
  ["HAVANA", 735, 577, 785, 573, true],
  ["GUADALAJARA", 552, 607, 546, 604],
  ["MEXICO CITY", 600, 622, 594, 619, true],
];

const countries: [string, number, number][] = [
  ["CUBA", 824, 594],
  ["JAMAICA", 843, 636],
  ["DOMINICAN", 920, 621],
  ["REPUBLIC", 920, 633],
  ["GUATEMALA", 694, 666],
  ["NICARAGUA", 755, 699],
];

const bigCountries: [string, number, number][] = [
  ["UNITED", 589, 334],
  ["STATES OF", 589, 350],
  ["AMERICA", 589, 366],
  ["MEXICO", 554, 564],
];

function WorldMap() {
  return (
    <svg
      viewBox="0 0 1166 692"
      preserveAspectRatio="xMidYMid slice"
      className="block w-full bg-[#cbd1d3] font-['Open_Sans','Noto_Sans',sans-serif]"
      role="img"
      aria-label="Ping errors by location"
    >
      <g transform="scale(0.33333)" strokeLinejoin="round" strokeLinecap="round">
        <g fill="#f5f5f3" stroke="#b0baba" strokeWidth="3">
          <path d={mainland} />
          {islands.map((d) => (
            <path key={d} d={d} />
          ))}
        </g>
        <path d={borders.join("")} fill="none" stroke="#e5e4e3" strokeWidth="3" />
        <path d={frontiers.join("")} fill="none" stroke="#ebdedd" strokeWidth="3" />
        <path d={rivers.join("")} fill="none" stroke="#bad4e8" strokeWidth="3" />
        <path d={inlets.join("")} fill="none" stroke="#b3bdbf" strokeWidth="4" />
        <path d={reefs.join("")} fill="none" stroke="#a9b3b4" strokeWidth="3" strokeDasharray="9 8" />
        <g fill="#cbd1d3" stroke="#b3bcbe" strokeWidth="3">
          {waters.map((d) => (
            <path key={d} d={d} />
          ))}
        </g>
      </g>

      <g fill="#a6a6a6" stroke="#f5f5f3" strokeWidth="3" strokeOpacity="0.8" textAnchor="middle" paintOrder="stroke">
        {bigCountries.map(([name, x, y]) => (
          <text key={name} x={x} y={y} fontSize="15">
            {name}
          </text>
        ))}
        {countries.map(([name, x, y]) => (
          <text key={name} x={x} y={y} fontSize="11">
            {name}
          </text>
        ))}
      </g>

      <g
        fill="#ffffff"
        stroke="#9eabb8"
        strokeWidth="2"
        paintOrder="stroke"
        fontStyle="italic"
        fontWeight="600"
        textAnchor="middle"
      >
        <text x="1117" y="52" fontSize="13">Labrador Sea</text>
        <text x="706" y="556" fontSize="13">Gulf of Mexico</text>
        <text x="876" y="685" fontSize="13">Caribbean Sea</text>
        <text x="16" y="32" fontSize="13">Gulf of Alaska</text>
        <g fontSize="18">
          <text x="17" y="485">North</text>
          <text x="17" y="506">Pacific</text>
          <text x="17" y="527">Ocean</text>
        </g>
      </g>

      <g
        fill="#8194a8"
        stroke="#f5f5f3"
        strokeWidth="3"
        strokeOpacity="0.85"
        paintOrder="stroke"
        fontSize="11"
        fontWeight="500"
      >
        {cities.map(([name, x, y, pinX, pinY, capital]) => (
          <g key={name}>
            {capital ? (
              <>
                <circle cx={pinX} cy={pinY} r="5" fill="#f7f7f6" stroke="none" />
                <path
                  transform={`translate(${pinX} ${pinY})`}
                  d="M0-3.4L.9-1.1L3.3-1L1.4.5L2.1 2.9L0 1.5L-2.1 2.9L-1.4.5L-3.3-1L-.9-1.1Z"
                  stroke="none"
                />
              </>
            ) : (
              <circle cx={pinX} cy={pinY} r="2" />
            )}
            <text x={x} y={y}>
              {name}
            </text>
          </g>
        ))}
        <text x="852" y="372">D.C.</text>
      </g>

      {markers.map(({ name, x, y, r, ok }) => (
        <circle
          key={name}
          cx={x}
          cy={y}
          r={r}
          fill={ok ? "#4fb02c" : "#ed6f38"}
          stroke={ok ? "#4fb02c" : "#ed6f38"}
          fillOpacity={ok ? 0.7 : 0.5}
          strokeOpacity="0.55"
          strokeWidth="4"
        />
      ))}
    </svg>
  );
}

const rows: [string, string, string][] = [
  ["new-jersey", "0", "981.00"],
  ["miami", "0", "503.00"],
  ["paris", "0", "363.00"],
  ["chicago", "0", "110.00"],
  ["amsterdam", "0", "80.00"],
  ["frankfurt", "0", "76.00"],
  ["silicon-valley", "0", "70.00"],
  ["san-francisco", "0", "63.00"],
  ["sydney", "0", "55.00"],
];

function ProbesPanel() {
  const head = "h-14 border-y-4 border-white bg-[#ebebeb] pt-2.5 pl-[30px] text-left font-bold text-[#29b2e6]";
  const cell = "h-[70px] border-b-4 border-white pl-[30px]";
  return (
    <section className="border-2 border-[#f3f3fa] bg-[#fbfbfb] pb-0.5">
      <h2 className="py-3.5 text-center text-[28px] leading-[30px] font-bold">Probes</h2>
      <table className="w-full table-fixed border-separate border-spacing-0 text-[28px] leading-8">
        <colgroup>
          <col />
          <col className="w-[334px]" />
          <col className="w-[308px]" />
          <col className="w-[18px]" />
        </colgroup>
        <thead>
          <tr>
            <th className={head}>
              <button type="button">Metric</button>
            </th>
            <th className={head}>
              <button type="button">Current</button>
            </th>
            <th className={head} colSpan={2} aria-sort="descending">
              <button type="button" className="flex items-center gap-2">
                Total
                <svg viewBox="0 0 16 9" className="w-4" aria-hidden="true">
                  <path d="M0 0H16L8 9Z" fill="currentColor" />
                </svg>
              </button>
            </th>
          </tr>
        </thead>
        <tbody>
          <tr aria-hidden="true">
            <td colSpan={4} className="h-1 p-0" />
          </tr>
          {rows.map(([metric, current, total], i) => (
            <tr key={metric}>
              <td className={`${cell} border-r-4`}>{metric}</td>
              <td className={`${cell} border-r-4`}>{current}</td>
              <td className={cell}>{total}</td>
              {i === 0 && (
                <td rowSpan={rows.length} className="pl-0.5 align-top">
                  <div className="h-[284px] border-2 border-[#d9d9d9] bg-[#ebebeb]" />
                </td>
              )}
            </tr>
          ))}
        </tbody>
      </table>
    </section>
  );
}

function PingErrorsPanel() {
  const link = "text-[#0078a8]";
  return (
    <section className="border-2 border-[#f3f3fa] bg-[#fbfbfb] px-5 pb-2.5">
      <h2 className="pt-3.5 pb-1.5 text-center text-[28px] leading-[30px] font-bold">Ping Errors</h2>
      <div className="relative overflow-hidden">
        <WorldMap />

        <div className="absolute top-5 left-5 flex w-[68px] flex-col overflow-hidden rounded-lg border-4 border-black/20 bg-white bg-clip-padding font-['Liberation_Mono',monospace] text-[44px] leading-[58px] font-bold text-black">
          <button type="button" aria-label="Zoom in" className="h-[60px] border-b-2 border-[#ccc]">
            +
          </button>
          <button type="button" aria-label="Zoom out" className="h-[60px]">
            -
          </button>
        </div>

        <ul className="absolute bottom-5 left-5 rounded-[10px] bg-white/80 px-4 py-3 text-[28px] leading-9 text-[#555] shadow-[0_0_30px_rgba(0,0,0,0.2)]">
          <li className="flex gap-4 pr-0.5">
            <span className="size-9 bg-[#67e273]" />
            &lt; 1
          </li>
          <li className="flex gap-4 pr-0.5">
            <span className="size-9 bg-[#eb9b74]" />
            1+
          </li>
        </ul>

        <p className="absolute right-0 bottom-0 bg-white/70 px-2.5 text-[22px] leading-8 text-[#333]">
          <a href="#leaflet" className={link}>Leaflet</a> | ©{" "}
          <a href="#openstreetmap" className={link}>OpenStreetMap</a> ©{" "}
          <a href="#cartodb" className={link}>CartoDB</a>
        </p>
      </div>
    </section>
  );
}

export default function App() {
  return (
    <main className="grid grid-cols-2 items-start gap-[22px] bg-white pt-1.5 pr-1 pl-[3px] font-['Liberation_Sans',Arial,sans-serif] text-[#555]">
      <ProbesPanel />
      <PingErrorsPanel />
    </main>
  );
}
